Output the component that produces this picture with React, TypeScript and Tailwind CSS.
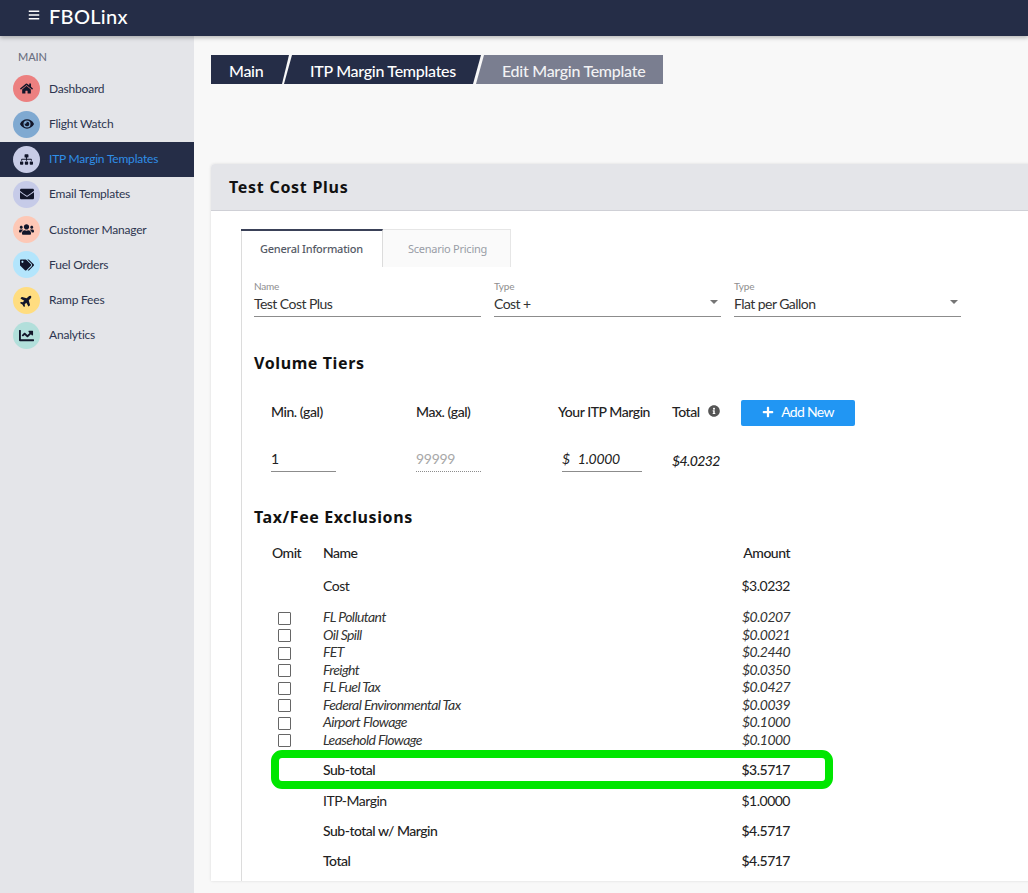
import { FaBars, FaChartLine, FaEnvelope, FaEye, FaHome, FaInfoCircle, FaPlane, FaPlus, FaSitemap, FaTags, FaUsers } from "react-icons/fa";
import type { ReactNode } from "react";

const navItems = [
  { label: "Dashboard", icon: <FaHome />, tint: "bg-[#ec8080]" },
  { label: "Flight Watch", icon: <FaEye className="text-[14px]" />, tint: "bg-[#7fa9d1]" },
  { label: "ITP Margin Templates", icon: <FaSitemap />, tint: "bg-[#c8cce6]", active: true },
  { label: "Email Templates", icon: <FaEnvelope className="text-[14px]" />, tint: "bg-[#c6cbe8]" },
  { label: "Customer Manager", icon: <FaUsers className="text-[15px]" />, tint: "bg-[#fdc8b6]" },
  { label: "Fuel Orders", icon: <FaTags className="text-[14px]" />, tint: "bg-[#b3e5fc]" },
  { label: "Ramp Fees", icon: <FaPlane className="-rotate-45" />, tint: "bg-[#ffdd80]" },
  { label: "Analytics", icon: <FaChartLine className="text-[15px]" />, tint: "bg-[#b2dfdb]" },
];

const taxes = [
  ["FL Pollutant", "$0.0207"],
  ["Oil Spill", "$0.0021"],
  ["FET", "$0.2440"],
  ["Freight", "$0.0350"],
  ["FL Fuel Tax", "$0.0427"],
  ["Federal Environmental Tax", "$0.0039"],
  ["Airport Flowage", "$0.1000"],
  ["Leasehold Flowage", "$0.1000"],
];

const Field = ({ label, value, select }: { label: string; value: string; select?: boolean }) => (
  <div className="w-[227px] h-[37px] border-b border-[#8c8c8c] relative">
    <div className="text-[10px] leading-[12px] text-[#8e8e8e] tracking-[-0.2px]">{label}</div>
    <div className="text-[14px] leading-[20px] mt-[2px] text-[#333] tracking-[-0.55px]">{value}</div>
    {select && (
      <span className="absolute right-[3px] top-[20px] w-0 h-0 border-x-[4.5px] border-x-transparent border-t-[4.5px] border-t-[#757575]" />
    )}
  </div>
);

const Row = ({ name, amount, className, children }: { name: string; amount: string; className?: string; children?: ReactNode }) => (
  <div className={`grid grid-cols-[51px_1fr_80px] w-[518px] items-center text-[14px] tracking-[-0.5px] ${className ?? ""}`}>
    <div className="pl-[6px] flex items-center">{children}</div>
    <div>{name}</div>
    <div className="text-right">{amount}</div>
  </div>
);

export default function App() {
  return (
    <div className="w-[1028px] h-[893px] overflow-hidden flex flex-col bg-[#f8f8f8] text-[#222] font-['Lato',sans-serif]">
      <header className="h-[36px] shrink-0 bg-[#252d47] flex items-center pl-[28px] gap-[9px] text-white shadow-[0_2px_4px_rgba(0,0,0,0.25)] relative z-10">
        <FaBars className="text-[12px] -mt-[7px]" />
        <span className="text-[20px] leading-none font-medium tracking-[0.3px] -mt-[4px]">FBOLinx</span>
      </header>

      <div className="flex flex-1 min-h-0">
        <aside className="w-[194px] shrink-0 bg-[#e4e5e9] pt-[14px]">
          <div className="pl-[18px] text-[11px] leading-[14px] text-[#6b6f80] font-medium tracking-[-0.1px]">MAIN</div>
          <nav className="mt-[7.3px]">
            {navItems.map((item) => (
              <div
                key={item.label}
                className={`h-[35.2px] flex items-center pl-[13px] gap-[9px] text-[12px] tracking-[-0.2px] ${item.active ? "bg-[#252d47] text-[#2f8fe8]" : "text-[#2d3550]"}`}
              >
                <span className={`w-[27px] h-[27px] rounded-full flex items-center justify-center text-[13px] text-[#12162a] ${item.tint}`}>
                  {item.icon}
                </span>
                {item.label}
              </div>
            ))}
          </nav>
        </aside>

        <main className="flex-1 min-w-0 pl-[17px] pt-[19px]">
          <div className="flex h-[29px] text-[16px] leading-[32px] font-medium text-white tracking-[-0.28px]">
            <div className="w-[78px] pl-[18px] bg-[#252d47] [clip-path:polygon(0_0,100%_0,calc(100%-7px)_100%,0_100%)]">Main</div>
            <div className="w-[197px] -ml-[5px] pl-[26px] bg-[#252d47] [clip-path:polygon(8px_0,100%_0,calc(100%-8px)_100%,0_100%)]">ITP Margin Templates</div>
            <div className="w-[187px] -ml-[5px] pl-[26px] bg-[#7a7e90] text-[#f2f2f4] [clip-path:polygon(8px_0,100%_0,100%_100%,0_100%)]">Edit Margin Template</div>
          </div>

          <section className="mt-[80px] w-[830px] h-[717px] bg-white rounded-tl-[4px] shadow-[0_0_3px_rgba(0,0,0,0.12)]">
            <div className="h-[47px] bg-[#e4e5e9] border-b border-[#cfd0d6] rounded-tl-[4px] pl-[18px] flex items-center text-[16px] font-bold tracking-[0.72px] text-[#111] font-['Noto_Sans',sans-serif]">
              Test Cost Plus
            </div>

            <div className="ml-[30px] mt-[18px] h-[652px] border-l border-[#dcdcdc]">
              <div className="flex h-[38px] text-[11px] font-['Noto_Sans',sans-serif]">
                <div className="w-[142px] -ml-px pt-px border-t-2 border-t-[#3a4158] border-r border-r-[#dcdcdc] flex items-center justify-center text-[#555a66] font-medium tracking-[-0.25px]">
                  General Information
                </div>
                <div className="w-[128px] pt-[2px] pl-[2px] border border-b-0 border-[#e6e6e6] border-l-0 bg-[#fafafa] flex items-center justify-center text-[#999da6] tracking-[-0.25px]">
                  Scenario Pricing
                </div>
              </div>

              <div className="pl-[12px]">
                <div className="flex gap-[13px] mt-[13px]">
                  <Field label="Name" value="Test Cost Plus" />
                  <Field label="Type" value="Cost +" select />
                  <Field label="Type" value="Flat per Gallon" select />
                </div>

                <h2 className="mt-[35px] text-[16px] leading-[22px] font-bold tracking-[0.6px] text-[#111] font-['Noto_Sans',sans-serif]">Volume Tiers</h2>

                <div className="mt-[26px] grid grid-cols-[145px_142px_114px_69px_auto] justify-start pl-[17px] text-[14px] font-medium items-center h-[26px] tracking-[-0.45px]">
                  <div className="pb-[4px]">Min. (gal)</div>
                  <div className="pb-[4px]">Max. (gal)</div>
                  <div className="pb-[4px]">Your ITP Margin</div>
                  <div className="pb-[4px] flex items-center gap-[8px]">
                    Total <FaInfoCircle className="text-[12px] text-[#555]" />
                  </div>
                  <button className="w-[114px] h-[26px] pb-[3px] bg-[#2196f3] text-white rounded-[2px] flex items-center justify-center gap-[7px] text-[14px] font-normal tracking-[-0.7px]">
                    <FaPlus className="text-[12px]" />
                    Add New
                  </button>
                </div>

                <div className="mt-[20px] grid grid-cols-[145px_146px_110px_auto] justify-start pl-[17px] text-[14px] items-start tracking-[-0.3px]">
                  <div className="w-[65px] h-[26px] border-b border-[#8c8c8c] leading-[25px]">1</div>
                  <div className="w-[65px] h-[26px] border-b border-dotted border-[#8c8c8c] leading-[25px] text-[#a8a8a8]">99999</div>
                  <div className="w-[80px] h-[26px] border-b border-[#8c8c8c] leading-[25px] italic">
                    <span className="mr-[8px]">$</span>1.0000
                  </div>
                  <div className="italic font-medium leading-[25px] mt-[2px] tracking-[-0.6px]">$4.0232</div>
                </div>

                <h2 className="mt-[33px] text-[16px] leading-[22px] font-bold tracking-[0.6px] text-[#111] font-['Noto_Sans',sans-serif]">Tax/Fee Exclusions</h2>

                <div className="ml-[18px] mt-[14px]">
                  <Row name="Name" amount="Amount" className="h-[20px] font-medium [&>div:first-child]:pl-0">
                    Omit
                  </Row>
                  <Row name="Cost" amount="$3.0232" className="h-[20px] mt-[13px]" />
                  <div className="mt-[11px]">
                    {taxes.map(([name, amount]) => (
                      <Row key={name} name={name} amount={amount} className="h-[17.5px] italic text-[#333] tracking-[-0.58px]">
                        <span className="w-[13px] h-[13px] border border-[#666] rounded-[1px] bg-white mt-[3px]" />
                      </Row>
                    ))}
                  </div>
                  <div className="relative mt-[13px]">
                    <Row name="Sub-total" amount="$3.5717" className="h-[20px] font-medium" />
                    <div className="absolute left-[-1px] top-[-9px] w-[562px] h-[39px] border-[8px] border-[#00e600] rounded-[11px] pointer-events-none" />
                  </div>
                  <Row name="ITP-Margin" amount="$1.0000" className="h-[20px] mt-[11px]" />
                  <Row name="Sub-total w/ Margin" amount="$4.5717" className="h-[20px] mt-[10px] font-medium" />
                  <Row name="Total" amount="$4.5717" className="h-[20px] mt-[10px] font-medium" />
                </div>
              </div>
            </div>
          </section>
        </main>
      </div>
    </div>
  );
}
